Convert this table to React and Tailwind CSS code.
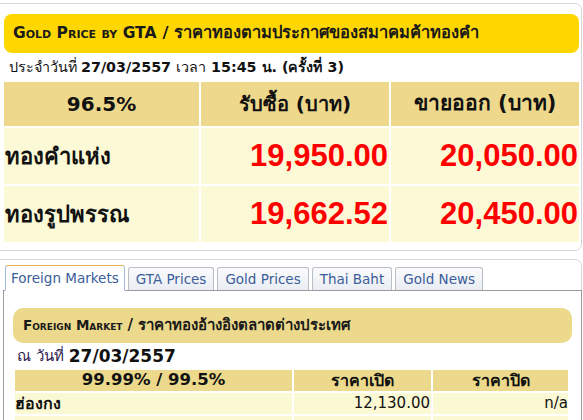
import React from 'react';

const tabs = ['Foreign Markets', 'GTA Prices', 'Gold Prices', 'Thai Baht', 'Gold News'];

const goldRows = [
  { name: 'ทองคำแห่ง', buy: '19,950.00', sell: '20,050.00' },
  { name: 'ทองรูปพรรณ', buy: '19,662.52', sell: '20,450.00' },
];

const App = () => {
  return (
    <div className="w-[583px] h-[420px] overflow-hidden bg-white font-['DejaVu_Sans','Noto_Sans',sans-serif] text-[#111]">
      {/* GTA price panel */}
      <div className="mt-[3px] ml-[-8px] mr-[1px] pl-[11px] pr-[2px] pt-[10px] pb-[8px] border border-[#d6d6d6] rounded-[7px]">
        <div className="h-[39px] bg-[#ffd700] rounded-[8px] flex items-center pl-[9px] font-bold text-[#1a1a1a]">
          <span className="text-[15.5px] [font-variant:small-caps]">Gold Price by GTA</span>
          <span className="ml-[6px] text-[16.5px]">/ ราคาทองตามประกาศของสมาคมค้าทองคำ</span>
        </div>
        <div className="h-[29px] flex items-center pl-[5px] text-[14.3px]">
          <span>ประจำวันที่</span>
          <span className="font-bold ml-[4px]">27/03/2557</span>
          <span className="ml-[5px]">เวลา</span>
          <span className="font-bold ml-[5px]">15:45 น. (ครั้งที่ 3)</span>
        </div>
        <div className="grid grid-cols-[195px_188px_188px] gap-[2px]">
          <div className="h-[44px] bg-[#eed88c] flex items-center justify-center text-[20px] font-bold">96.5%</div>
          <div className="h-[44px] bg-[#eed88c] flex items-center justify-center text-[20px] font-bold">รับซื้อ (บาท)</div>
          <div className="h-[44px] bg-[#eed88c] flex items-center justify-center text-[21px] font-bold">ขายออก (บาท)</div>
          {goldRows.map((row) => (
            <React.Fragment key={row.name}>
              <div className="h-[56px] bg-[#fcf9d6] flex items-center pl-[1px] text-[22px] font-bold">{row.name}</div>
              <div className="h-[56px] bg-[#fcf9d6] flex items-center justify-end pr-[1px] text-[31px] font-bold text-[#ff0000] font-['Liberation_Sans',sans-serif]">{row.buy}</div>
              <div className="h-[56px] bg-[#fcf9d6] flex items-center justify-end pr-[1px] text-[31px] font-bold text-[#ff0000] font-['Liberation_Sans',sans-serif]">{row.sell}</div>
            </React.Fragment>
          ))}
        </div>
      </div>

      {/* Foreign markets panel */}
      <div className="mt-[8px] ml-[-8px] mr-[1px] pl-[11px] pt-[5px] border border-[#d6d6d6] rounded-[7px] h-[200px]">
        <div className="flex items-end gap-[3px] pl-[1px]">
          {tabs.map((tab, i) => (
            <div
              key={tab}
              className={
                i === 0
                  ? 'h-[26px] px-[5px] flex items-center text-[13.5px] text-[#3b5d9a] bg-white border border-[#9fb9df] border-t-[#e8b04a] border-b-white rounded-t-[3px] mb-[-1px] relative'
                  : 'h-[23px] px-[7px] flex items-center text-[13.5px] text-[#3b5d9a] bg-gradient-to-b from-[#fbfbfb] to-[#e9edf3] border border-[#b9bec6] border-b-0 rounded-t-[3px]'
              }
            >
              {tab}
            </div>
          ))}
        </div>
        <div className="border border-[#9c9c9c] mr-[-1px] ml-[-1px] pt-[17px] px-[9px] h-[140px]">
          <div className="h-[35px] bg-[#ecd98b] rounded-[10px] flex items-center pl-[10px] font-bold text-[#1a1a1a]">
            <span className="text-[13.5px] [font-variant:small-caps]">Foreign Market</span>
            <span className="ml-[5px] text-[15px]">/ ราคาทองอ้างอิงตลาดต่างประเทศ</span>
          </div>
          <div className="h-[27px] flex items-center pl-[4px] text-[15px]">
            <span className="text-[#2e2050]">ณ วันที่</span>
            <span className="font-bold ml-[5px] text-[17px]">27/03/2557</span>
          </div>
          <div className="grid grid-cols-[277px_137px_135px] gap-[2px] pl-[2px]">
            <div className="h-[21px] bg-[#ecd98b] flex items-center justify-center font-bold text-[16.5px]">99.99% / 99.5%</div>
            <div className="h-[21px] bg-[#ecd98b] flex items-center justify-center font-bold text-[16px]">ราคาเปิด</div>
            <div className="h-[21px] bg-[#ecd98b] flex items-center justify-center font-bold text-[16px]">ราคาปิด</div>
            <div className="h-[21px] bg-[#fbf8d4] flex items-center font-bold text-[16px]">ฮ่องกง</div>
            <div className="h-[21px] bg-[#fbf8d4] flex items-center justify-end pr-[1px] text-[15px]">12,130.00</div>
            <div className="h-[21px] bg-[#fbf8d4] flex items-center justify-end text-[15px]">n/a</div>
            <div className="h-[21px] bg-[#fbf8d4]"></div>
            <div className="h-[21px] bg-[#fbf8d4]"></div>
            <div className="h-[21px] bg-[#fbf8d4]"></div>
          </div>
        </div>
      </div>
    </div>
  );
};

export default App;
